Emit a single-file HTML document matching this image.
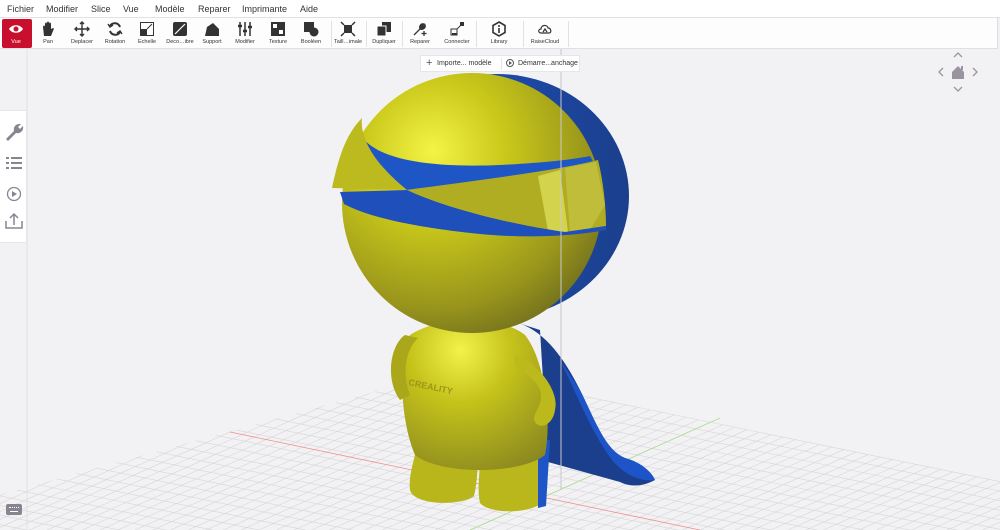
<!DOCTYPE html>
<html><head><meta charset="utf-8"><style>
*{margin:0;padding:0;box-sizing:border-box}
html{overflow:hidden}
body{width:1000px;height:530px;overflow:hidden;background:#f2f2f4;font-family:"Liberation Sans",sans-serif;position:relative}
#menu{position:absolute;left:0;top:0;width:1000px;height:18px;background:#fff;border-bottom:1px solid #e2e2e6;font-size:9px;color:#333}
#menu span{position:absolute;top:4px}
#tb{position:absolute;left:0;top:18px;width:998px;height:31px;background:#fdfdfd;border-bottom:1px solid #e0e0e4;border-right:1px solid #ddd}
.it{position:absolute;top:1px;height:29px;text-align:center;font-size:5.5px;color:#333;transform:translateX(-50%);width:34px}
.it svg{display:block;margin:2px auto 2px;width:16px;height:16px}
.sep{position:absolute;top:3px;width:1px;height:26px;background:#e2e2e6}
#side{position:absolute;left:0;top:110px;width:27px;height:133px;background:#fff;border:1px solid #e6e6ea;border-left:none}
#pill{position:absolute;left:420px;top:55px;width:160px;height:17px;background:#fff;border:1px solid #e6e6ea;font-size:7px;color:#333}
</style></head><body>
<svg width="1000" height="530" style="position:absolute;left:0;top:0;display:block">
<defs>
<clipPath id="gc"><polygon points="454,370 1100,492 1100,600 -100,600 -100,522"/></clipPath>
<radialGradient id="hy" cx="0.35" cy="0.3" r="0.8"><stop offset="0" stop-color="#f4f446"/><stop offset="0.35" stop-color="#c9c81a"/><stop offset="0.75" stop-color="#99951c"/><stop offset="1" stop-color="#6b6a1e"/></radialGradient>
<radialGradient id="by" cx="0.4" cy="0.2" r="0.9"><stop offset="0" stop-color="#f2f24a"/><stop offset="0.4" stop-color="#c4c21a"/><stop offset="1" stop-color="#8a8720"/></radialGradient>
<linearGradient id="bl" x1="0" y1="0" x2="1" y2="0"><stop offset="0" stop-color="#1d55c8"/><stop offset="1" stop-color="#1b3f8c"/></linearGradient>
</defs>
<g id="grid" stroke="#d6d6da" stroke-width="0.6" clip-path="url(#gc)"></g>
<line x1="230" y1="432" x2="700" y2="530" stroke="#f09090" stroke-width="0.8"/>
<line x1="720" y1="418" x2="470" y2="530" stroke="#a8dc90" stroke-width="0.8"/>
<path d="M515,322 C545,330 565,360 580,390 C595,420 605,450 625,458 C640,462 652,472 655,480 C640,488 628,486 620,482 L548,462 L540,330 Z" fill="#1b3f8c"/>
<path d="M560,360 C575,390 590,430 612,460 C625,475 640,482 655,480 C650,470 640,462 625,458 C605,450 595,420 580,390 Z" fill="#1d55c8"/>
<ellipse cx="497" cy="196" rx="132" ry="122" fill="url(#bl)"/>
<path d="M418,430 C418,455 408,470 410,490 C414,506 462,506 474,496 C478,480 478,460 478,440 Z" fill="#b9b61b"/>
<path d="M480,440 C482,465 476,485 480,503 C490,515 535,514 545,500 C547,480 548,460 548,440 Z" fill="#bab71c"/>
<path d="M538,440 L550,440 L546,506 L538,508Z" fill="#1d55c8"/>
<path d="M410,335 C440,315 500,315 525,335 C545,360 552,420 545,455 C520,475 440,475 415,455 C400,420 398,360 410,335 Z" fill="url(#by)"/>
<path d="M405,335 C390,345 385,380 400,400 L410,395 C402,375 405,350 418,338 Z" fill="#aaa71a"/>
<path d="M515,355 C535,360 560,390 555,410 C553,425 540,430 535,422 C530,415 545,405 540,390 C535,378 520,370 515,365Z" fill="#bcb91c"/>
<text x="408" y="385" font-size="9" fill="#9a971a" transform="rotate(12 408 385)" font-weight="bold">CREALITY</text>
<circle cx="472" cy="203" r="130" fill="url(#hy)"/>
<path d="M358,130 C370,160 430,168 500,165 C540,163 570,160 590,156 L598,170 C560,175 480,180 407,190 C380,175 355,160 358,130 Z" fill="#1f56c6"/>
<path d="M407,190 C480,180 560,170 598,160 C603,180 606,205 606,226 L565,232 C520,225 450,210 407,190 Z" fill="#b0ad22"/>
<path d="M538,176 L560,170 L568,232 L548,231 Z" fill="#dcdc5a" opacity="0.8"/>
<path d="M565,168 L596,162 L605,205 L590,230 L570,232 Z" fill="#c3c040" opacity="0.8"/>
<path d="M340,192 L407,190 C450,210 520,226 565,232 L606,226 L606,230 C570,237 520,238 480,234 C420,228 370,218 344,204 Z" fill="#1e4fba"/>
<path d="M332,188 C338,160 345,135 362,118 C360,135 370,160 407,190 Z" fill="#bcba1e"/>
<line x1="561" y1="49" x2="561" y2="490" stroke="#c8c8cc" stroke-width="1"/>
<line x1="27" y1="49" x2="27" y2="530" stroke="#dcdce0" stroke-width="0.8"/>
</svg>
<script>
(function(){var g=document.getElementById('grid'),O=[545,496.6],U=[-315,-64.6],V=[175,-78.6],s='';
var a0=-3,a1=2.5,b0=-4,b1=0.946;
function P(a,b){return [O[0]+a*U[0]+b*V[0],O[1]+a*U[1]+b*V[1]]}
var da=1/26,db=1/12;
for(var a=0;a<=a1;a+=da){var p=P(a,b0),q=P(a,b1);s+='<line x1="'+p[0]+'" y1="'+p[1]+'" x2="'+q[0]+'" y2="'+q[1]+'"/>';}
for(var a=-da;a>=a0;a-=da){var p=P(a,b0),q=P(a,b1);s+='<line x1="'+p[0]+'" y1="'+p[1]+'" x2="'+q[0]+'" y2="'+q[1]+'"/>';}
for(var b=b1;b>=b0;b-=db){var p=P(a0,b),q=P(a1,b);s+='<line x1="'+p[0]+'" y1="'+p[1]+'" x2="'+q[0]+'" y2="'+q[1]+'"/>';}
g.innerHTML=s;})();
</script>
<div id="menu"><span style="left:7px">Fichier</span><span style="left:46px">Modifier</span><span style="left:91px">Slice</span><span style="left:123px">Vue</span><span style="left:155px">Modèle</span><span style="left:198px">Reparer</span><span style="left:242px">Imprimante</span><span style="left:300px">Aide</span></div>
<div id="tb">
<div style="position:absolute;left:2px;top:1px;width:30px;height:29px;background:#c8102e;border-radius:2px"></div>
<div class="it" style="left:16px;color:#fff"><svg viewBox="0 0 16 16"><path d="M1,8 C4,3 12,3 15,8 C12,13 4,13 1,8Z" fill="#fff"/><circle cx="8" cy="8" r="2.5" fill="#c8102e"/></svg>Vue</div>
<div class="it" style="left:48px"><svg viewBox="0 0 16 16"><path d="M4,15 L3,6 C3,4 5,4 5,6 L5,3 C5,1 7,1 7,3 L7,2 C7,0 9,0 9,2 L9,3 C9,1 11,1 11,3 L11,8 L13,7 C14,7 14,8 13,10 L11,15Z" fill="#333"/></svg>Pan</div>
<div class="it" style="left:82px"><svg viewBox="0 0 16 16" stroke="#333" stroke-width="1.4" fill="none"><path d="M8,1V15M1,8H15M6,3L8,1L10,3M6,13L8,15L10,13M3,6L1,8L3,10M13,6L15,8L13,10"/></svg>Deplacer</div>
<div class="it" style="left:115px"><svg viewBox="0 0 16 16" stroke="#333" stroke-width="2" fill="none"><path d="M13,6A5.5,5.5 0 0 0 3,5M3,10A5.5,5.5 0 0 0 13,11"/><path d="M1,3L3,6L6,4M15,13L13,10L10,12" stroke-width="1.4"/></svg>Rotation</div>
<div class="it" style="left:147px"><svg viewBox="0 0 16 16"><rect x="1.5" y="1.5" width="13" height="13" fill="none" stroke="#333"/><rect x="2" y="8" width="6" height="6" fill="#333"/><path d="M8,8L13,3" stroke="#333"/></svg>Echelle</div>
<div class="it" style="left:180px"><svg viewBox="0 0 16 16"><rect x="1" y="1" width="14" height="14" rx="2" fill="#333"/><path d="M3,13L13,3" stroke="#fff" stroke-width="1.2"/></svg>Deco…ibre</div>
<div class="it" style="left:212px"><svg viewBox="0 0 16 16"><path d="M1,15L3,6L9,2L15,8L15,15Z" fill="#333"/></svg>Support</div>
<div class="it" style="left:245px"><svg viewBox="0 0 16 16" stroke="#333" stroke-width="1.5"><path d="M3,1V15M8,1V15M13,1V15"/><path d="M1,5H5M6,10H10M11,6H15" stroke-width="2.5"/></svg>Modifier</div>
<div class="it" style="left:278px"><svg viewBox="0 0 16 16"><rect x="1" y="1" width="14" height="14" fill="#333"/><rect x="3" y="3" width="4" height="4" fill="#fff"/><rect x="9" y="9" width="4" height="4" fill="#fff"/></svg>Texture</div>
<div class="it" style="left:311px"><svg viewBox="0 0 16 16"><rect x="1" y="1" width="10" height="10" fill="#333"/><circle cx="11" cy="11" r="4.5" fill="#333"/></svg>Booléen</div>
<div class="sep" style="left:331px"></div>
<div class="it" style="left:348px"><svg viewBox="0 0 16 16"><rect x="4" y="4" width="8" height="8" fill="#333"/><path d="M1,1L4,4M15,1L12,4M1,15L4,12M15,15L12,12" stroke="#333" stroke-width="1.5"/></svg>Taill…imale</div>
<div class="sep" style="left:366px"></div>
<div class="it" style="left:384px"><svg viewBox="0 0 16 16"><rect x="6" y="1" width="9" height="10" fill="#333"/><rect x="1" y="5" width="9" height="10" fill="#333" stroke="#fff"/></svg>Dupliquer</div>
<div class="sep" style="left:402px"></div>
<div class="it" style="left:420px"><svg viewBox="0 0 16 16"><path d="M2,14L8,8C7,5 9,2 12,3L10,5L11,6L13,4C14,7 11,9 8,8" fill="#333" stroke="#333" stroke-width="1.3"/><path d="M12,10V15M9.5,12.5H14.5" stroke="#333" stroke-width="1.3"/></svg>Reparer</div>
<div class="it" style="left:457px"><svg viewBox="0 0 16 16"><rect x="2" y="8" width="6" height="6" fill="none" stroke="#333"/><rect x="3" y="12" width="5" height="2" fill="#333"/><path d="M8,8L13,3" stroke="#333"/><rect x="11" y="1" width="4" height="4" fill="#333"/></svg>Connecter</div>
<div class="sep" style="left:476px"></div>
<div class="it" style="left:499px"><svg viewBox="0 0 16 16"><path d="M8,1L14,4.5V11.5L8,15L2,11.5V4.5Z" fill="none" stroke="#333" stroke-width="1.6"/><path d="M8,7V12" stroke="#333" stroke-width="1.6"/><circle cx="8" cy="5" r="1" fill="#333"/></svg>Library</div>
<div class="sep" style="left:523px"></div>
<div class="it" style="left:545px;width:40px"><svg viewBox="0 0 16 16" fill="none" stroke="#333" stroke-width="1.2"><path d="M4,12C1,12 1,8 4,8C4,4 10,3 11,7C14,7 15,12 12,12Z"/><path d="M6,11L8,8L10,11"/></svg>RaiseCloud</div>
<div class="sep" style="left:568px"></div>
</div>
<div id="pill"><span style="position:absolute;left:5px;top:1px;font-size:11px;color:#555;line-height:13px">+</span><span style="position:absolute;left:16px;top:4px">Importe... modèle</span><div style="position:absolute;left:80px;top:2px;width:1px;height:12px;background:#e2e2e6"></div><span style="position:absolute;left:85px;top:3px;width:8px;height:8px;border:1px solid #555;border-radius:50%"></span><span style="position:absolute;left:88px;top:5px;width:0;height:0;border-left:3px solid #555;border-top:2px solid transparent;border-bottom:2px solid transparent"></span><span style="position:absolute;left:97px;top:4px">Démarre...anchage</span></div>
<div id="side">
<svg width="27" height="133" viewBox="0 0 27 133" fill="#8a8490" stroke="#8a8490">
<path d="M6,28L14,20C13,16 16,12 21,13L18,16L20,18L23,15C24,20 20,23 16,22L8,30Z" stroke="none"/>
<g stroke="none"><rect x="6" y="46" width="3" height="2"/><rect x="11" y="46" width="11" height="2"/><rect x="6" y="51" width="3" height="2"/><rect x="11" y="51" width="11" height="2"/><rect x="6" y="56" width="3" height="2"/><rect x="11" y="56" width="11" height="2"/></g>
<circle cx="14" cy="83" r="6.5" fill="none" stroke-width="1.3"/><path d="M12,80L17,83L12,86Z" stroke="none"/>
<path d="M6,110V117H22V110M14,114V104M10,107L14,103L18,107" fill="none" stroke-width="1.5"/>
</svg></div>
<svg style="position:absolute;left:936px;top:50px" width="44" height="44" viewBox="0 0 44 44" fill="none" stroke="#9a94a0" stroke-width="1.3">
<path d="M18,7L22,3L26,7M18,37L22,41L26,37M7,18L3,22L7,26M37,18L41,22L37,26"/>
<path d="M16,22L22,16L28,22V29H16Z" fill="#9a94a0" stroke="none"/><rect x="25" y="16" width="2" height="4" fill="#9a94a0" stroke="none"/>
</svg>
<div style="position:absolute;left:6px;top:504px;width:16px;height:11px;background:#8a8490;border-radius:2px"></div>
<div style="position:absolute;left:9px;top:507px;width:10px;height:2px;border-top:1px dotted #fff"></div>
<div style="position:absolute;left:10px;top:511px;width:8px;height:1px;background:#fff"></div>
</body></html>
